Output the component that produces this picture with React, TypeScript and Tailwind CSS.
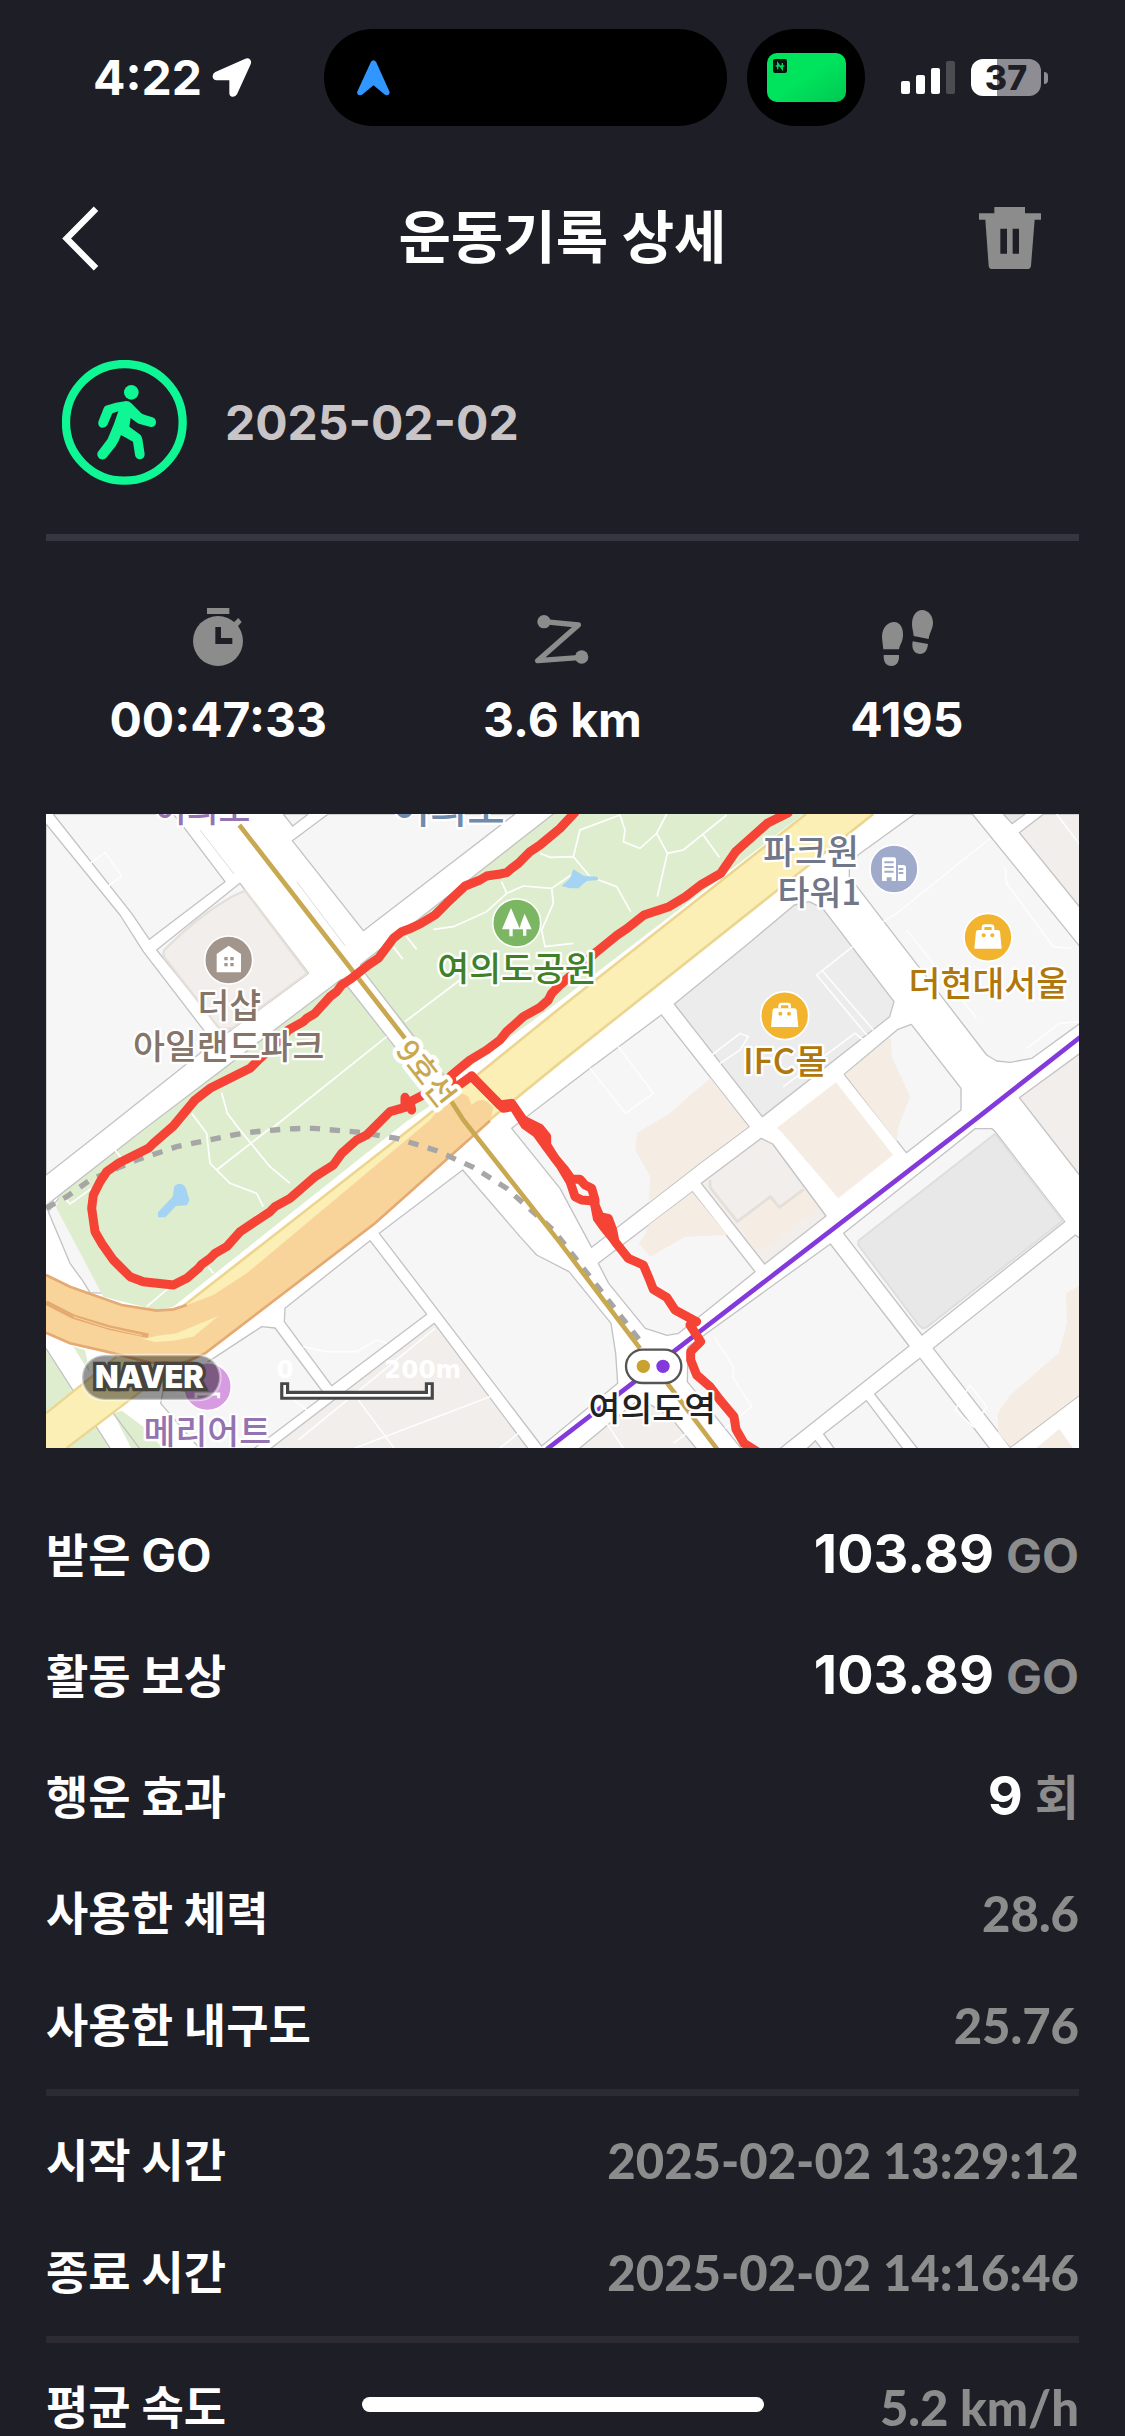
import { ReactNode } from 'react'

const stats = [
  { label: '운동 시간', value: '00:47:33', icon: <StopwatchIcon /> },
  { label: '거리', value: '3.6 km', icon: <DistanceIcon /> },
  { label: '걸음 수', value: '4195', icon: <StepsIcon /> },
]

const rewards = [
  { label: '받은 GO', value: '103.89', unit: 'GO' },
  { label: '활동 보상', value: '103.89', unit: 'GO' },
  { label: '행운 효과', value: '9', unit: '회' },
]

const usage = [
  { label: '사용한 체력', value: '28.6' },
  { label: '사용한 내구도', value: '25.76' },
]

const times = [
  { label: '시작 시간', value: '2025-02-02 13:29:12' },
  { label: '종료 시간', value: '2025-02-02 14:16:46' },
]

const speeds = [{ label: '평균 속도', value: '5.2 km/h' }]

function StopwatchIcon() {
  return (
    <svg viewBox="434 795 198 198" className="size-[66px] fill-[#8c8c8c]" aria-hidden="true">
      <rect x="500" y="804" width="67" height="18" />
      <circle cx="533" cy="903" r="75" />
      <path d="M576 851 594 834 604 846 588 864Z" />
      <path d="M525 861h17v33h34v18h-51Z" fill="#1e1e26" />
    </svg>
  )
}

function DistanceIcon() {
  return (
    <svg viewBox="208 45 198 198" className="size-[66px]" aria-hidden="true">
      <path
        d="M253 95 356 105 234 212 366 202"
        fill="none"
        stroke="#8c8c8c"
        strokeWidth="16"
        strokeLinecap="round"
        strokeLinejoin="round"
      />
      <circle cx="253" cy="95" r="20" fill="#8c8c8c" />
      <circle cx="366" cy="201" r="20" fill="#8c8c8c" />
    </svg>
  )
}

function StepsIcon() {
  return (
    <svg viewBox="1242 45 198 198" className="size-[66px] fill-[#8c8c8c]" aria-hidden="true">
      <path d="M1270 178C1268 160 1266 148 1266 138C1267 112 1284 96 1302 96C1322 96 1330 116 1329 137C1328 156 1319 164 1317 178Z" />
      <path d="M1271 195H1317C1318 216 1310 228 1294 228C1278 228 1270 216 1271 195Z" />
      <path d="M1361 138C1360 124 1356 116 1356 102C1356 76 1370 60 1386 60C1406 61 1419 77 1419 100C1418 118 1408 130 1406 147Z" />
      <path d="M1358 154 1404 162C1402 182 1394 192 1380 192C1362 191 1354 177 1358 154Z" />
    </svg>
  )
}

function WalkIcon() {
  return (
    <svg viewBox="65 59 375 375" className="size-[125px]" role="img" aria-label="걷기">
      <circle cx="252" cy="246" r="175" fill="none" stroke="#0ff794" strokeWidth="25" />
      <circle cx="273" cy="156" r="22" fill="#0ff794" />
      <path
        d="M196 196Q226 186 258 182Q266 182 273 189L302 218Q306 222 312 223L336 231Q348 235 347 248Q344 261 331 260L298 251Q292 249 288 246L271 233L267 259L298 282Q305 287 306 296L313 341Q313 355 299 357Q286 356 284 343L278 304L242 284Q236 302 226 317L198 352Q189 361 178 355Q168 347 172 336L202 296Q212 272 221 250L234 213L216 219L201 254Q195 264 183 262Q172 257 174 244L190 204Q192 198 196 196Z"
        fill="#0ff794"
      />
    </svg>
  )
}

function StatusBar() {
  return (
    <div className="flex shrink-0 items-center pt-[29px] pr-[77px] pl-[93px]">
      <div className="flex flex-1 items-center gap-[10px]">
        <span className="text-[48px] leading-[56px] font-bold">4:22</span>
        <svg viewBox="513 112 120 120" className="size-10 fill-white" aria-hidden="true">
          <path d="M613 114Q622 111 628 117Q632 123 629 131L588 221Q583 230 573 228Q565 226 565 217V179H527Q516 178 515 168Q514 159 523 154Z" />
        </svg>
      </div>
      <div className="flex gap-5">
        <div className="flex h-[97px] w-[403px] items-center rounded-full bg-black pl-[33px]">
          <svg viewBox="951 112 100 110" className="h-9 w-[33px] fill-[#2f97ff]" aria-hidden="true">
            <path d="M993 118Q1001 107 1009 118L1050 209Q1052 218 1042 220L1036 218 1001 189 966 218 960 220Q950 219 951 210Z" />
          </svg>
        </div>
        <div className="flex h-[97px] w-[118px] items-center justify-center rounded-full bg-black">
          <div className="flex h-[49px] w-[79px] items-start rounded-[10px] bg-linear-to-br from-[#00e35c] from-50% to-[#00c853] p-[6px]">
            <svg viewBox="0 0 42 42" className="size-[14px]" aria-hidden="true">
              <rect width="42" height="42" rx="6" fill="#04160c" />
              <path d="M14 31V12L28 31V12M8 21H34" fill="none" stroke="#00d85c" strokeWidth="4" />
            </svg>
          </div>
        </div>
      </div>
      <div className="ml-9 flex items-center gap-4">
        <div className="flex h-[33px] items-end gap-[6px]">
          <span className="h-[13px] w-[9px] rounded-[2px] bg-white" />
          <span className="h-[19px] w-[9px] rounded-[2px] bg-white" />
          <span className="h-[26px] w-[9px] rounded-[2px] bg-white" />
          <span className="h-[33px] w-[9px] rounded-[2px] bg-[#4b4b50]" />
        </div>
        <div className="flex items-center gap-[3px]">
          <div className="flex h-[37px] w-[70px] items-center justify-center rounded-[12px] bg-linear-to-r from-white from-37% to-[#8e8d93] to-37% text-[34px] leading-none font-extrabold text-[#1e1e26]">
            37
          </div>
          <span className="h-3 w-1 rounded-r-full bg-[#8e8d93]" />
        </div>
      </div>
    </div>
  )
}

function Header() {
  return (
    <header className="grid h-[224px] shrink-0 grid-cols-[1fr_auto_1fr] items-center pr-[84px] pl-[62px]">
      <button type="button" aria-label="뒤로 가기" className="justify-self-start">
        <svg viewBox="65 553 112 196" className="h-[65px] w-[37px]" aria-hidden="true">
          <path d="M168 561 79 651 168 741" fill="none" stroke="#fff" strokeWidth="19" />
        </svg>
      </button>
      <h1 className="pl-[22px] text-[57px] leading-[80px] font-bold">운동기록 상세</h1>
      <button type="button" aria-label="기록 삭제" className="justify-self-end">
        <svg viewBox="777 558 186 186" className="size-[62px] fill-[#8c8c8c]" aria-hidden="true">
          <path d="M823 558H915V577H963V596H944L933 734Q932 744 922 744H817Q807 744 806 734L796 596H777V577H823Z" />
          <path d="M841 623h20v75h-20ZM878 623h19v75h-19Z" fill="#1e1e26" />
        </svg>
      </button>
    </header>
  )
}

function Row({ label, children }: { label: string; children: ReactNode }) {
  return (
    <>
      <dt className="text-[46px] leading-[68px] font-bold">{label}</dt>
      <dd className="flex items-baseline gap-3">{children}</dd>
    </>
  )
}

function PlainRows({ rows }: { rows: { label: string; value: string }[] }) {
  return (
    <dl>
      {rows.map(row => (
        <div key={row.label} className="flex h-28 items-center justify-between">
          <Row label={row.label}>
            <span className="font-['Lato','Inter',sans-serif] text-[49px] leading-[58px] font-black text-[#8c8c8c]">
              {row.value}
            </span>
          </Row>
        </div>
      ))}
    </dl>
  )
}

// map geometry, one list of points per city block
const blocks = [
  '18,72 240,345 310,455 510,715 480,760 190,990 18,1125',
  '40,42 275,340 328,418 555,245 430,80 400,42',
  '350,450 600,250 806,520 560,700 545,690',
  '730,42 758,78 805,42',
  '757,122 865,42 1425,42 970,392',
  '1415,985 1650,805 1864,645 2127,980 1980,1090 1655,1342 1560,1165',
  '1675,1390 1957,1175 2145,1415 1916,1600 1881,1606 1816,1585 1706,1450',
  '2413,823 2574,688 2614,673 2763,865 2763,930 2599,1058',
  '2454,165 2624,42 2797,42 3120,440 3120,670 2976,775 2911,787 2870,783 2840,765 2428,230 2428,200',
  '2411,1300 2805,986 2856,986 2866,996 3074,1265 2646,1605',
  '1944,1640 2371,1332 2607,1638 2218,1947 2105,1947 1942,1745',
  '2680,1645 3106,1305 3120,1315 3120,1785 2911,1942',
  '2504,1782 2640,1675 2850,1947 2634,1947',
  '2351,1902 2479,1802 2589,1947 2384,1947',
  '1018,1300 1268,1110 1440,1310 1490,1365 1587,1415 1713,1570 1727,1660 1733,1750 1505,1938',
  '735,1525 990,1322 1160,1543 875,1757 733,1565',
  '520,1675 665,1580 705,1584 855,1785 640,1947 480,1947 362,1810 370,1770',
]

const warmBlocks = [
  '690,1947 1183,1570 1465,1947',
  '2938,98 3011,42 3120,42 3120,322',
  '2938,893 3120,760 3120,1127',
  '1984,1150 2164,1015 2198,1032 2358,1248 2174,1392',
  '1616,1947 1800,1795 1890,1850 1970,1947',
  '2300,1947 2326,1922 2345,1947',
]

const peachAreas = [
  '2012,835 1940,895 1890,940 1806,990 1791,1000 1786,1050 1831,1130 1826,1208 1980,1088 2125,980',
  '1831,1370 1796,1330 1812,1310 1826,1275 1957,1177 2062,1305 1936,1310',
  '2092,1265 2203,1185 2218,1222 2291,1165 2338,1225 2263,1275 2174,1350 2137,1342',
  '2211,983 2388,847 2559,1065 2395,1195 2228,1000',
  '2415,823 2552,712 2555,770 2610,890 2575,980 2570,1025',
  '3120,1455 3078,1480 3081,1570 3056,1660 2911,1785 2873,1840 2875,1900 2911,1940 3120,1783',
  '2985,1947 3058,1887 3101,1947',
]

const parkPaths = [
  '1180,388 1240,380 1340,335 1400,280 1450,258 1535,265 1600,220',
  '1385,245 1400,280',
  '1535,265 1540,310 1505,390 1515,440 1600,430',
  '1500,160 1530,172 1600,170 1650,230 1730,260 1772,335',
  '1600,170 1620,90 1740,45 1755,90 1750,125 1800,145 1850,100 1880,42',
  '1850,100 1882,160 1852,290',
  '1882,160 1930,150 2060,45',
  '1990,105 2038,172',
  '1095,665 1260,540',
  '690,990 1040,710',
  '545,878 562,940 600,990 690,1100 750,1150',
  '455,940 500,1000 510,1090 570,1150 650,1180 670,1220',
  '530,1110 690,985',
  '1060,440 1088,477',
  '1098,408 1130,448',
  '225,1050 245,1075',
  '320,1520 385,1465',
  '505,1400 520,1420',
  '75,1195 90,1212 155,1165',
]

const lanes = [
  '150,190 195,158 245,228 205,258',
  '1650,805 1757,940 1840,880 1735,740',
  '2015,765 2100,700 2125,710 2100,750 2040,790',
  '2438,440 2330,525 2480,705',
  '2345,510 2500,690',
  '2230,860 2445,700 2470,720',
  '2530,365 2570,340 2850,115',
  '2600,390 2810,655',
  '2895,200 2900,250 3040,440 3095,445',
  '3050,42 3120,135',
  '2960,745 3060,670 3120,665',
  '790,1640 860,1655 950,1655 1010,1620 1040,1630',
  '750,1790 800,1830',
  '945,1944 1350,1790',
  '955,1800 1062,1944',
  '775,1920 1185,1585',
  '1380,1944 1435,1900',
  '2022,1610 2080,1700 2080,1735 2135,1820 2055,1885',
  '1700,1870 1750,1944',
  '1900,1930 1965,1880',
  '2745,1830 2790,1755 2840,1820 2800,1880Z',
]

const route = [
  '1604,38 1560,85 1500,135 1470,155 1435,190 1415,205 1400,218 1380,222 1340,228 1320,240 1275,258 1220,310 1185,345 1140,372 1105,388 1085,395 1060,415 1015,475 985,495 935,535 905,555 890,575 870,590 825,640 800,655 790,665 745,690 720,720 655,780 630,805 570,835 510,865 465,900 440,930 400,978 340,1030 325,1045 235,1090 200,1115 180,1145 160,1185 155,1225 165,1295 185,1330 220,1380 270,1430 310,1445 400,1455 440,1435 475,1405 485,1393 510,1375 525,1360 560,1340 600,1295 690,1235 705,1220 750,1195 825,1130 880,1095 905,1060 950,1020 980,1005 1020,965 1050,935 1095,922 1095,892 1115,930 1110,905 1150,885 1220,868 1250,860 1295,828',
  '2245,38 2182,70 2087,155 2042,220 1982,255 1937,290 1887,320 1812,345 1762,385 1732,405 1670,455 1600,520 1560,555 1535,580 1525,600 1500,622 1450,650 1400,695 1380,720 1340,750 1290,780 1232,828 1240,860',
  '1295,828 1380,915 1415,910 1450,960 1500,985 1520,1010 1520,1035 1545,1075 1575,1110 1595,1138 1620,1138 1635,1155 1655,1165 1665,1200 1665,1215 1680,1250 1705,1255 1718,1290 1725,1325 1745,1350 1765,1375 1810,1395 1825,1430 1840,1468 1880,1492 1905,1530 1970,1565 1950,1575 1982,1625 1952,1655 1952,1680 1970,1725 2010,1760 2040,1800 2082,1850 2088,1888 2112,1930 2150,1954',
  '1300,835 1390,925 1420,920 1455,975 1490,1000 1515,1035 1560,1095 1590,1145 1605,1190 1625,1200 1662,1203 1672,1255 1690,1280 1722,1320',
]

const mapLabels = [
  { text: '여의도', x: 488, y: 67, className: 'fill-[#9473b0]' },
  { text: '더샵', x: 568, y: 653, className: 'fill-[#857468]' },
  { text: '아일랜드파크', x: 566, y: 778, className: 'fill-[#857468]' },
  { text: '여의도공원', x: 1431, y: 543, className: 'fill-[#3f8127]' },
  { text: '파크원', x: 2313, y: 192, className: 'fill-[#6f7789]' },
  { text: '타워1', x: 2338, y: 316, className: 'fill-[#6f7789]' },
  { text: 'IFC몰', x: 2235, y: 821, className: 'fill-[#b0770c]' },
  { text: '더현대서울', x: 2845, y: 587, className: 'fill-[#b0770c]' },
  { text: '메리어트', x: 502, y: 1932, className: 'fill-[#9473b0]' },
  { text: '여의도역', x: 1837, y: 1863, className: 'fill-[#222]' },
]

function ShoppingPin({ x, y }: { x: number; y: number }) {
  return (
    <g transform={`translate(${x} ${y})`}>
      <circle r="72" fill="#f2b42f" stroke="#fff" strokeWidth="5" />
      <path d="M-30 -22H30Q35 -22 36 -17L41 34H-41L-36 -17Q-35 -22 -30 -22Z" fill="#fff" />
      <path d="M-15 -22V-29Q-15 -35 -9 -35H9Q15 -35 15 -29V-22" fill="none" stroke="#fff" strokeWidth="8" />
      <circle cx="-13" cy="-6" r="6" fill="#f2b42f" />
      <circle cx="13" cy="-6" r="6" fill="#f2b42f" />
    </g>
  )
}

function RouteMap() {
  return (
    <svg viewBox="18 42 3099 1902" className="block w-full bg-white" role="img" aria-label="여의도 운동 경로 지도">
      {/* blocks */}
      <g fill="#f6f6f6" stroke="#c3c3c3" strokeWidth="4" strokeLinejoin="round">
        {blocks.map(points => (
          <polygon key={points} points={points} />
        ))}
        <g fill="#f1eeeb">
          {warmBlocks.map(points => (
            <polygon key={points} points={points} />
          ))}
        </g>
        <polygon points="1903,612 2120,435 2263,315 2308,305 2348,325 2562,605 2549,650 2167,950" fill="#ececec" />
        <polygon points="2890,42 2916,71 2956,42" fill="#e8e8e8" />
        <path d="M25 1235 60 1190 200 1480 150 1478 130 1445 90 1390Z" />
      </g>
      <g fill="#f5ece3">
        {peachAreas.map(points => (
          <polygon key={points} points={points} />
        ))}
      </g>
      <path
        d="M373 450Q470 350 575 290L615 272 802 520 575 686H538L373 472Q368 460 373 450Z"
        fill="#f1eeeb"
        stroke="#e4dfd9"
        strokeWidth="7"
      />
      <path d="M2010 1140V1162L2092 1265 2191 1190 2218 1222 2291 1168" fill="none" stroke="#e4dfd9" strokeWidth="8" />
      <polygon
        points="2455,1322 2865,1002 3068,1262 2660,1582 2648,1585 2636,1575 2455,1335"
        fill="#e8e8e8"
        stroke="#dedede"
        strokeWidth="6"
      />
      <g fill="none" stroke="#fdfdfd" strokeWidth="5">
        {lanes.map(d => (
          <path key={d} d={`M${d}`} />
        ))}
      </g>
      <path d="M480 90 582 222M770 245 915 437" stroke="#dcdcdc" strokeWidth="3" />

      {/* park */}
      <g fill="#dfedcf">
        <path d="M960 495 1540 42H2290L1560 602 1222 850 975 520Z" />
        <path d="M905 537 1190 905 1105 960 400 1520 350 1530 190 1490 48 1222 62 1180Z" />
        <path d="M18 1645 210 1944H18ZM100 1640 150 1720 135 1650ZM220 1840 245 1832 310 1880 370 1947H275Z" />
      </g>
      <path
        d="M905 537 300 997 18 1217M960 495 1540 42M905 537 1080 760M975 520 1220 835M18 1645 210 1944M220 1840 300 1947"
        fill="none"
        stroke="#c3c3c3"
        strokeWidth="4"
      />
      <g fill="none" stroke="#fff" strokeWidth="5">
        {parkPaths.map(d => (
          <path key={d} d={`M${d}`} />
        ))}
      </g>
      <path d="M354 1237V1252H376L408 1218 441 1216 448 1200 438 1165Q425 1142 403 1158L398 1190Z" fill="#a5d3f4" />
      <path d="M1565 258 1590 265H1615L1640 243 1675 240 1672 230 1632 228 1600 208 1590 235Z" fill="#a5d3f4" />

      {/* main roads */}
      <path d="M18 1840 230 1670H430L80 1944H18Z" fill="#fcefb6" />
      <path d="M18 1840 230 1670M420 1685 80 1944" stroke="#ecd68f" strokeWidth="7" />
      <path d="M2298 42H2500L1560 788 1335 970 1005 1270 495 1640 400 1540 430 1518 1145 960 1560 622Z" fill="#fcefb6" />
      <path d="M430 1518 1145 960 1560 624 2298 42M2500 42 1560 788 1330 975" fill="none" stroke="#ecd68f" strokeWidth="8" />
      <path
        d="M18 1425 90 1460 245 1515 350 1532 400 1528 440 1515 520 1485 620 1420 1170 960 1228 890Q1255 868 1285 890L1295 915Q1330 880 1360 925L1350 962 1005 1270 495 1660 430 1690 330 1688 200 1655 90 1630 18 1598Z"
        fill="#f8d49b"
      />
      <path
        d="M18 1425 90 1460 245 1515 350 1532 400 1528 440 1515M1350 962 1005 1270 495 1660 430 1690 330 1688 200 1655 90 1630 18 1598"
        fill="none"
        stroke="#e5aa72"
        strokeWidth="8"
      />
      <path d="M18 1508 100 1550 210 1583 325 1607" fill="none" stroke="#e5aa72" strokeWidth="14" />
      <path d="M100 1550 200 1582 305 1606" fill="none" stroke="#f8d49b" strokeWidth="3" />
      <path d="M310 1617 350 1608 410 1600 535 1548 460 1610 400 1622 345 1626Z" fill="#fcefb6" />

      {/* railways */}
      <path
        d="M18 1225 80 1190 150 1140 290 1080 410 1040 590 1003Q710 985 820 985L960 997 1070 1015 1190 1052 1300 1102 1400 1165 1450 1210 1540 1290 1800 1622"
        fill="none"
        stroke="#a6a6a6"
        strokeWidth="16"
        strokeDasharray="31 29"
      />
      <path
        d="M598 75 1095 715M1225 890 1270 960 1560 1328 1800 1645M1882 1750 2032 1948"
        fill="none"
        stroke="#c8a850"
        strokeWidth="14"
      />
      <path d="M3120 712 2810 955 1520 1948" fill="none" stroke="#8439dd" strokeWidth="14" />

      {/* recorded route */}
      <g fill="none" stroke="#f54336" strokeWidth="27" strokeLinecap="round" strokeLinejoin="round">
        {route.map(points => (
          <polyline key={points} points={points} />
        ))}
      </g>

      {/* pins */}
      <g stroke="#fff" strokeWidth="5">
        <circle cx="566" cy="480" r="72" fill="#a1958c" />
        <circle cx="1430" cy="369" r="72" fill="#7bb662" />
        <circle cx="2562" cy="207" r="72" fill="#a0abcc" />
        <circle cx="502" cy="1760" r="72" fill="#d69be0" />
      </g>
      <path d="M530 517V462L566 437 603 462V517Z" fill="#fff" />
      <path d="M553 471h10v10h-10zM571 471h10v10h-10zM553 489h10v10h-10zM571 489h10v10h-10z" fill="#a1958c" />
      <path d="M1413 324 1440 388H1418V409H1408V388H1386ZM1454 341 1475 388H1459V407H1449V388H1438L1443 370Z" fill="#fff" />
      <path d="M2526 243V178Q2526 172 2532 172H2562Q2568 172 2568 178V243H2555V232H2540V243ZM2574 243V195H2590Q2598 195 2598 203V243Z" fill="#fff" />
      <path d="M2533 187h28M2533 201h28M2533 215h28M2576 207h14M2576 219h14" stroke="#a0abcc" strokeWidth="6" />
      <path d="M468 1795V1782H536V1795" fill="none" stroke="#fff" strokeWidth="9" />
      <ShoppingPin x={2844} y={412} />
      <ShoppingPin x={2234} y={647} />
      <rect x="1758" y="1649" width="166" height="100" rx="50" fill="#fff" stroke="#555" strokeWidth="7" />
      <circle cx="1810" cy="1699" r="20" fill="#c9a12e" />
      <circle cx="1869" cy="1699" r="20" fill="#8439dd" />

      {/* place names */}
      <g
        textAnchor="middle"
        stroke="#fff"
        strokeWidth="14"
        strokeLinejoin="round"
        paintOrder="stroke"
        className="font-['Noto_Sans_CJK_KR',sans-serif] text-[104px] font-medium"
      >
        {mapLabels.map(({ text, x, y, className }) => (
          <text key={`${text}-${x}`} x={x} y={y} className={className}>
            {text}
          </text>
        ))}
        <text x="1226" y="68" className="fill-[#6f8aab] text-[122px]">
          여의도
        </text>
        <text transform="translate(1132 840) rotate(52)" strokeWidth="26" className="fill-[#c8a850] text-[92px]">
          9호선
        </text>
      </g>

      {/* logo and scale bar */}
      <rect
        x="126"
        y="1665"
        width="415"
        height="135"
        rx="67"
        fill="#000"
        fillOpacity=".42"
        stroke="#fff"
        strokeOpacity=".45"
        strokeWidth="8"
      />
      <text
        x="328"
        y="1765"
        textAnchor="middle"
        stroke="#45443f"
        strokeWidth="20"
        paintOrder="stroke"
        className="fill-white font-['Inter',sans-serif] text-[92px] font-black"
      >
        NAVER
      </text>
      <g textAnchor="middle" className="fill-white font-['DejaVu_Sans',sans-serif] text-[74px] font-bold">
        <text x="735" y="1733">0</text>
        <text x="1148" y="1733">200m</text>
      </g>
      <path d="M734 1747V1786H1168V1747" fill="none" stroke="#474747" strokeWidth="27" />
      <path d="M734 1755V1786H1168V1755" fill="none" stroke="#fff" strokeWidth="8" />
    </svg>
  )
}

export default function App() {
  return (
    <div className="relative flex h-screen flex-col overflow-hidden bg-[#1e1e26] font-['Inter','Noto_Sans_CJK_KR',sans-serif] text-white">
      <StatusBar />
      <Header />

      <main className="flex-1 overflow-y-auto px-[46px] [scrollbar-width:none]">
        <section className="flex items-center gap-[38px] border-b-[7px] border-[#373640] px-4 pt-[10px] pb-[49px]">
          <WalkIcon />
          <time dateTime="2025-02-02" className="text-[48px] leading-[58px] font-bold text-[#c9c5c6]">
            2025-02-02
          </time>
        </section>

        <dl className="grid grid-cols-3 pt-16 pb-[65px]">
          {stats.map(({ label, value, icon }) => (
            <div key={label} className="flex flex-col items-center gap-5">
              <dt aria-label={label}>{icon}</dt>
              <dd className="text-[48px] leading-[58px] font-bold">{value}</dd>
            </div>
          ))}
        </dl>

        <RouteMap />

        <dl className="pt-[46px]">
          {rewards.map(({ label, value, unit }) => (
            <div key={label} className="flex h-[121px] items-center justify-between">
              <Row label={label}>
                <span className="text-[54px] leading-[68px] font-bold">{value}</span>
                <span className="text-[48px] leading-[68px] font-bold text-[#8c8c8c]">{unit}</span>
              </Row>
            </div>
          ))}
        </dl>
        <PlainRows rows={usage} />
        <hr className="my-2 h-[7px] border-0 bg-[#2c2b34]" />
        <PlainRows rows={times} />
        <hr className="my-2 h-[7px] border-0 bg-[#2c2b34]" />
        <PlainRows rows={speeds} />
      </main>

      <div className="absolute bottom-6 left-1/2 h-[15px] w-[402px] -translate-x-1/2 rounded-full bg-white" />
    </div>
  )
}
